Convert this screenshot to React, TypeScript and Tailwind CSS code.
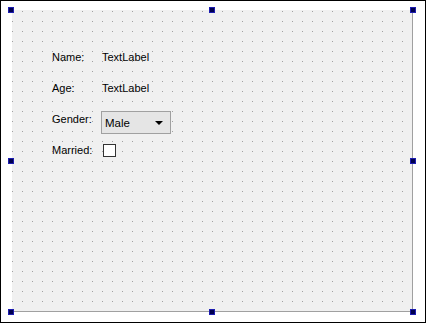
import React from 'react';

const handles = [
  'left-[7px] top-[6px]',
  'left-[208px] top-[6px]',
  'left-[409px] top-[6px]',
  'left-[7px] top-[157px]',
  'left-[409px] top-[157px]',
  'left-[7px] top-[308px]',
  'left-[208px] top-[308px]',
  'left-[409px] top-[308px]',
];

function DotGrid() {
  return (
    <svg className="absolute inset-0" width="100%" height="100%">
      <defs>
        <pattern id="dots" x="0" y="0" width="10" height="10" patternUnits="userSpaceOnUse">
          <rect x="0" y="1" width="1" height="1" fill="#a0a0a0" />
        </pattern>
      </defs>
      <rect width="100%" height="100%" fill="url(#dots)" />
    </svg>
  );
}

export default function App() {
  return (
    <div className="relative w-[426px] h-[323px] border border-black bg-white font-['Liberation_Sans',sans-serif] text-[11px] text-black">
      <div className="relative ml-[11px] mt-[9px] w-[401px] h-[302px] bg-[#f0f0f0] border-r border-b border-[#a0a0a0]">
        <DotGrid />
        <div className="relative grid grid-cols-[50px_auto] auto-rows-[31px] items-center pl-[40px] pt-[32px] w-fit">
          <span>Name:</span>
          <span>TextLabel</span>
          <span>Age:</span>
          <span>TextLabel</span>
          <span>Gender:</span>
          <div className="self-start mt-[7px] -ml-px flex items-center justify-between w-[70px] h-[23px] bg-[#e5e5e5] border border-[#a0a0a0] pl-[3px] pr-[7px]">
            <span className="text-[11.5px] pt-[2px]">Male</span>
            <svg width="8" height="4" viewBox="0 0 8 4">
              <polygon points="0,0 8,0 4,4" fill="#000" />
            </svg>
          </div>
          <span className="-mt-px">Married:</span>
          <div className="ml-px -mt-px w-[13px] h-[13px] bg-white border border-[#333]" />
        </div>
      </div>
      {handles.map((h) => (
        <div key={h} className={`absolute ${h} w-[6px] h-[6px] bg-[#000050] border border-[#1c1cb0]`} />
      ))}
    </div>
  );
}
